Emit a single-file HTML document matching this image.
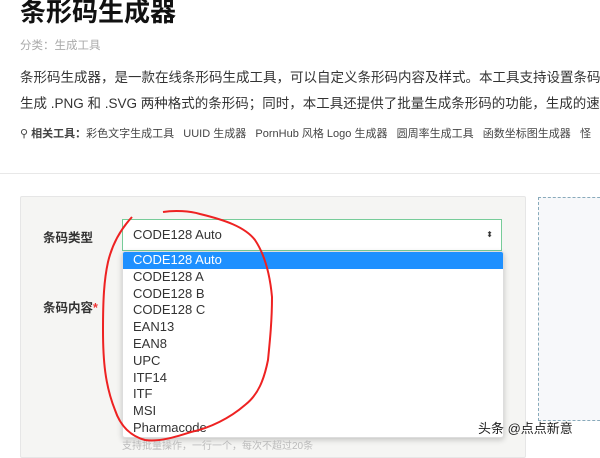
<!DOCTYPE html>
<html><head><meta charset="utf-8"><style>
body{margin:0;width:600px;height:447px;overflow:hidden;background:#fff;font-family:"Liberation Sans","Noto Sans CJK SC",sans-serif;position:relative}
.a{position:absolute;white-space:nowrap}
h1{position:absolute;left:20px;top:-8px;margin:0;font-size:26px;font-weight:bold;color:#111}
.opt{height:16.8px;line-height:16.8px;padding-left:10px;font-size:13px;color:#333}
</style></head><body>
<h1>条形码生成器</h1>
<div class="a" style="left:20px;top:37px;font-size:11.5px;color:#aaa">分类：生成工具</div>
<div class="a" style="left:20px;top:66px;font-size:13.5px;color:#333">条形码生成器，是一款在线条形码生成工具，可以自定义条形码内容及样式。本工具支持设置条码</div>
<div class="a" style="left:20px;top:92px;font-size:13.5px;color:#333">生成 .PNG 和 .SVG 两种格式的条形码；同时，本工具还提供了批量生成条形码的功能，生成的速度</div>
<div class="a" style="left:20px;top:125px;font-size:11px;color:#444">⚲ <b>相关工具：</b>彩色文字生成工具 &nbsp; UUID 生成器 &nbsp; PornHub 风格 Logo 生成器 &nbsp; 圆周率生成工具 &nbsp; 函数坐标图生成器 &nbsp; 怪</div>
<div class="a" style="left:0;top:173px;width:600px;height:1px;background:#e8e8e8"></div>
<div class="a" style="left:20px;top:196px;width:504px;height:260px;background:#f5f5f3;border:1px solid #e6e6e6;border-radius:2px"></div>
<div class="a" style="left:538px;top:197px;width:70px;height:222px;border:1px dashed #8ab;background:#f7f8fa"></div>
<div class="a" style="left:43px;top:227px;font-size:12.5px;font-weight:bold;color:#333">条码类型</div>
<div class="a" style="left:43px;top:297px;font-size:12.5px;font-weight:bold;color:#333">条码内容<span style="color:#e33">*</span></div>
<div class="a" style="left:122px;top:219px;width:378px;height:30px;background:#fff;border:1px solid #7c9;font-size:13px;line-height:30px;color:#333"><span style="padding-left:10px">CODE128 Auto</span><span style="position:absolute;right:8px;font-size:8px">⬍</span></div>
<div class="a" style="left:122px;top:251px;width:380px;height:185px;background:#fff;border:1px solid #ddd;border-radius:3px;box-shadow:0 2px 6px rgba(0,0,0,.2);overflow:hidden">
<div class="opt" style="background:#1e90ff;color:#fff">CODE128 Auto</div>
<div class="opt">CODE128 A</div><div class="opt">CODE128 B</div><div class="opt">CODE128 C</div><div class="opt">EAN13</div><div class="opt">EAN8</div><div class="opt">UPC</div><div class="opt">ITF14</div><div class="opt">ITF</div><div class="opt">MSI</div><div class="opt">Pharmacode</div>
</div>
<div class="a" style="left:122px;top:437px;font-size:10px;color:#bbb">支持批量操作，一行一个，每次不超过20条</div>
<div class="a" style="left:478px;top:418px;font-size:13px;color:#222;text-shadow:0 0 2px #fff">头条 @点点新意</div>
<svg class="a" style="left:0;top:0" width="600" height="447"><path d="M163 212 C175 210 190 211 200 214 C225 220 245 227 255 240 C265 255 270 275 272 297 C272 320 270 340 268 360 C264 380 258 395 245 405 C230 418 210 428 191 432 C175 437 160 442 145 440 C130 436 120 425 115 410 C105 385 103 360 103 330 C103 300 104 280 108 262 C112 245 120 230 132 217" fill="none" stroke="#e22" stroke-width="2"/></svg>
</body></html>
